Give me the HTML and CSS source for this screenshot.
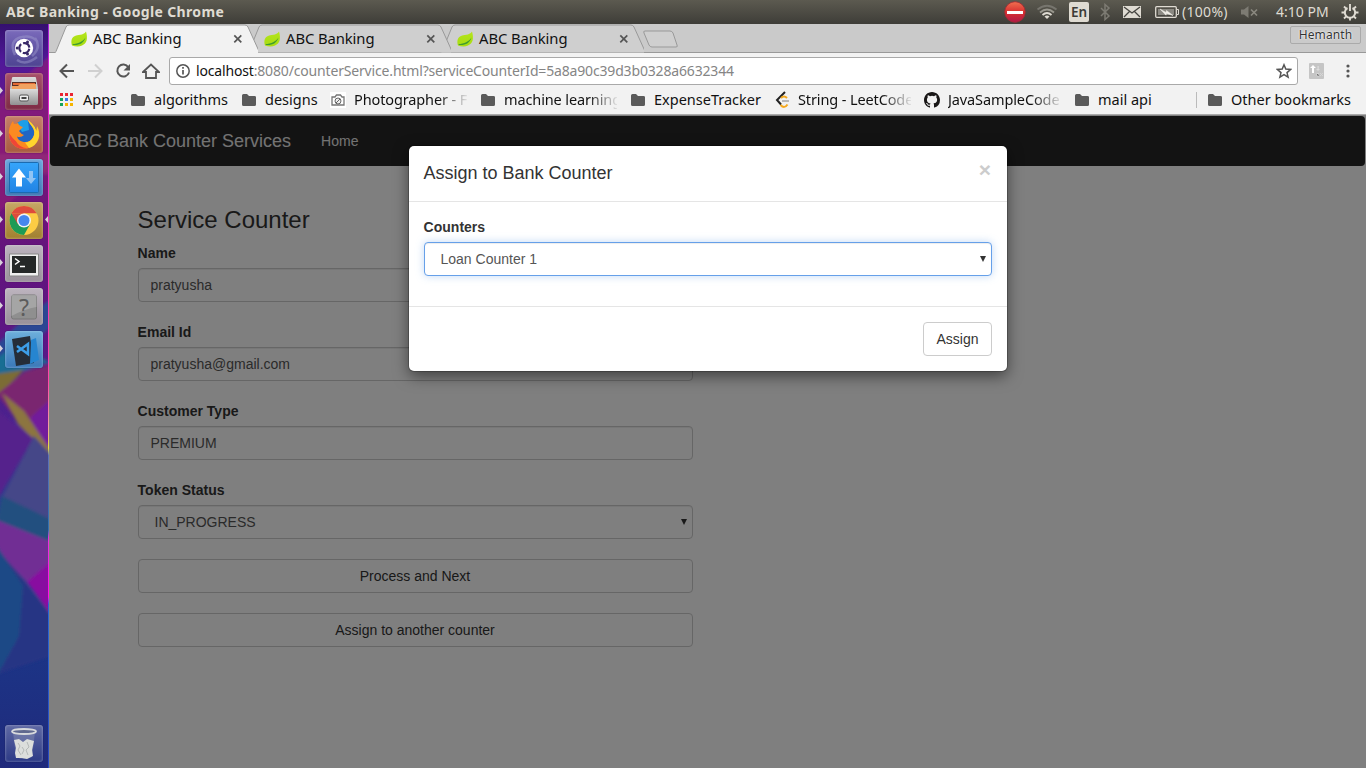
FILE: index.html
```html
<!DOCTYPE html>
<html lang="en">
<head>
<meta charset="utf-8">
<title>ABC Banking</title>
<link rel="stylesheet" href="styles.css">
</head>
<body>
<svg class="defs" aria-hidden="true">
  <defs>
    <linearGradient id="red" x1="0" y1="0" x2="0" y2="1"><stop offset="0" stop-color="#f07050"/><stop offset=".5" stop-color="#d83030"/><stop offset="1" stop-color="#b01848"/></linearGradient>
    <linearGradient id="steel" x1="0" y1="0" x2="0" y2="1"><stop offset="0" stop-color="#dcdcdc"/><stop offset="1" stop-color="#919191"/></linearGradient>
    <linearGradient id="leaf" x1="0" y1="0" x2="0" y2="1"><stop offset="0" stop-color="#b4e51a"/><stop offset="1" stop-color="#a8dc12"/></linearGradient>
    <linearGradient id="sky" x1="0" y1="0" x2="0" y2="1"><stop offset="0" stop-color="#35a5fb"/><stop offset="1" stop-color="#2183e4"/></linearGradient>
    <linearGradient id="fox" x1="0" y1="1" x2="1" y2="0"><stop offset="0" stop-color="#ef4030"/><stop offset=".5" stop-color="#fb7b20"/><stop offset="1" stop-color="#ffe033"/></linearGradient>
    <linearGradient id="wall" x1="0" y1="0" x2="0" y2="1"><stop offset="0" stop-color="#34106e"/><stop offset=".05" stop-color="#50189a"/><stop offset=".17" stop-color="#7a1878"/><stop offset=".3" stop-color="#64147c"/><stop offset=".42" stop-color="#5c1684"/><stop offset=".55" stop-color="#482490"/><stop offset=".7" stop-color="#1d4e8a"/><stop offset=".85" stop-color="#1c3486"/><stop offset="1" stop-color="#202a7c"/></linearGradient>
    <linearGradient id="edge" x1="0" y1="0" x2="0" y2="1"><stop offset="0" stop-color="#a020d8"/><stop offset=".08" stop-color="#e020d0"/><stop offset=".48" stop-color="#ff48a8"/><stop offset=".54" stop-color="#f0a0a0"/><stop offset=".57" stop-color="#e8e040"/><stop offset=".58" stop-color="#5c70b8"/><stop offset=".68" stop-color="#3070b0"/><stop offset=".69" stop-color="#e830e0"/><stop offset=".77" stop-color="#ff10e8"/><stop offset=".78" stop-color="#2868d8"/><stop offset="1" stop-color="#2848c0"/></linearGradient>
    <filter id="soft"><feGaussianBlur stdDeviation="1.800"/></filter>
    <symbol id="i-leaf" viewBox="0 0 17 16"><path fill="url(#leaf)" d="M15 0.500c2 7 1 12-4 14C8 16 4 15.500 1 14.500 0 11 0 7.500 3 5.500 7 3 12 5 15 0.500z"/><path d="M1.500 13C7 13 12 10.500 14.500 6.500 13 12 8.500 14.500 2 14z" fill="#3f9d2f"/></symbol>
    <symbol id="i-close" viewBox="0 0 10 10"><path d="M1.300 1.300l7 7m0-7l-7 7" stroke="#555" stroke-width="1.700"/></symbol>
    <symbol id="i-folder" viewBox="0 0 14 12"><path fill="#5a5a5a" d="M1.500 0H5l2 2h5.500Q14 2 14 3.300v7.200Q14 12 12.500 12h-11Q0 12 0 10.500v-9Q0 0 1.500 0z"/></symbol>
  </defs>
</svg>

<header class="panel">
  <span class="panel-title">ABC Banking - Google Chrome</span>
  <div class="indicators">
    <svg width="22" height="22" viewBox="0 0 22 22"><circle cx="11" cy="11" r="10.300" fill="url(#red)" stroke="#a32a33" stroke-width=".8"/><path fill="#fff" d="M3 10h16v3H3z"/></svg>
    <svg width="22" height="18" viewBox="0 0 22 18" fill="none" stroke-width="1.800"><path d="M1.500 6.500Q11-1 20.500 6.500" stroke="#77756e"/><path d="M4 9.500Q11 3.500 18 9.500" stroke="#9a988f"/><path d="M6.500 12Q11 8 15.500 12" stroke="#dfdbd2"/><path d="M11 16l-2.500-2.500q2.500-1.800 5 0z" fill="#dfdbd2"/></svg>
    <span class="lang">En</span>
    <svg width="14" height="18" viewBox="0 0 14 18"><path d="M3 5l8 8-4 3.500v-15L11 5l-8 8" fill="none" stroke="#7d7b73" stroke-width="1.500"/></svg>
    <svg width="20" height="14" viewBox="0 0 20 14"><rect x="1" y="1" width="18" height="12" fill="#dfdbd2"/><path d="M2 2l8 6 8-6M2 12l5.500-5.500M18 12l-5.500-5.500" fill="none" stroke="#45443f" stroke-width="1.300"/></svg>
    <svg width="26" height="14" viewBox="0 0 26 14"><rect x="1.700" y="1.700" width="20.600" height="10.600" rx="1" fill="none" stroke="#dfdbd2" stroke-width="1.300"/><path d="M23 4.500h1.500v5H23" fill="none" stroke="#dfdbd2"/><path fill="#8b8982" d="M4 4h16v6H4z"/><path d="M6 4l6 3.500.5-2L19 10.500l-6.500-2-.5 1.700z" fill="#f1eee7" stroke="#f1eee7" stroke-width=".5"/></svg>
    <span class="panel-text battery">(100%)</span>
    <svg width="20" height="14" viewBox="0 0 20 14"><path d="M1 4.500h3L8.500 1v12L4 9.500H1z" fill="#7d7b73"/><path d="M11 4.500l6 6m0-6l-6 6" stroke="#8a887f" stroke-width="1.700"/></svg>
    <span class="panel-text clock">4:10 PM</span>
    <svg width="18" height="18" viewBox="0 0 18 18" fill="none" stroke="#dfdbd2"><path d="M6.500 5A5.200 5.200 0 1 0 11.500 5" stroke-width="2"/><path d="M9 14.500v3M9 1v7M.5 9.500h4M13.500 9.500h4M3 3.500l2.400 2.400M15 3.500l-2.400 2.400M3 15.500l2.400-2.400M15 15.500l-2.400-2.400" stroke-width="1.900"/></svg>
  </div>
</header>

<div class="desktop">
  <nav class="launcher">
    <svg class="wallpaper" width="49" height="744" viewBox="0 0 49 744">
      <path fill="url(#wall)" d="M0 0h49v744H0z"/>
      <g filter="url(#soft)">
        <path fill="#8c1d78" opacity=".7" d="M-3 76L52 30v110L-3 190z"/>
        <path fill="#9a3378" opacity=".5" d="M-3 130h55v20H-3z"/>
        <path fill="#1d559a" opacity=".75" d="M-3 320L25 294l27-20v28L-3 350z"/>
        <path fill="#167294" opacity=".9" d="M-3 334L14 322 50 338-3 356z"/>
        <path fill="#7c6c36" d="M-3 350L24 346-3 373z"/>
        <path fill="#7a2670" d="M-3 370l28-22 27-8v82L12 390z"/>
        <path fill="#721b9b" d="M30 394l22-20v60z"/>
        <path fill="#8c7440" d="M2 369l22 18 26 39v6L18 400z"/>
        <path fill="#54208c" d="M-3 386l36 28L2 468l-5 8z"/>
        <path fill="#454688" d="M34 412l18 20v82L2 474z"/>
        <path fill="#20507f" d="M2 472l50 24v26L-3 500z"/>
        <path fill="#712d94" d="M-3 496l55 22v68L-3 526z"/>
        <path fill="#880fa0" d="M27 558l25-22v56z"/>
        <path fill="#263484" d="M-3 524l55 68v40L-3 650z"/>
        <path fill="#1d4a86" d="M-3 522l26 40-4 50-22 40z"/>
      </g>
      <path fill="url(#edge)" d="M48 0h1v744h-1z"/>
      <g fill="#d8d0da"><path d="M0 63l3 3.500L0 70zM0 106l3 3.500L0 113zM0 149l3 3.500L0 156zM0 192l3 3.500L0 199zM0 235l3 3.500L0 242zM0 278l3 3.500L0 285zM0 321l3 3.500L0 328zM48 192l-3 3.500 3 3.500z"/></g>
    </svg>
    <div class="tile dash"><svg width="38" height="37" viewBox="0 0 38 37"><g fill="none" stroke="#aaa8d6" stroke-width="2.500" opacity=".4"><path d="M10 25Q3 10 17 7q8-2 14 3"/><path d="M27 26q10-9 3-18M12 30q9 6 20-3"/></g><circle cx="19" cy="18" r="9.200" fill="#fff"/><circle cx="19.300" cy="18" r="5" fill="none" stroke="#382968" stroke-width="2.200" stroke-dasharray="8.500 2" transform="rotate(8 19 18)"/><g fill="#382968"><circle cx="12.200" cy="18" r="1.500"/><circle cx="22.500" cy="12" r="1.500"/><circle cx="22.500" cy="24" r="1.500"/></g></svg></div>
    <div class="tile files"><svg width="38" height="37" viewBox="0 0 38 37"><path fill="url(#steel)" d="M7 5q0-1 1-1h22q1 0 1 1l2 10v15q0 2-2 2H7q-2 0-2-2V15z"/><path d="M7 9h24v9H7z" fill="#5b3026"/><path d="M8 10h22v2H8z" fill="#e46b35"/><path d="M7 13h6l2-2h16v7H7z" fill="#f1a261"/><path d="M5 16h28v14q0 2-2 2H7q-2 0-2-2z" fill="url(#steel)"/><rect x="14.500" y="22" width="9" height="6" rx="1.500" fill="#eee" stroke="#555"/><path d="M16.500 25h5" stroke="#444" stroke-width="2"/></svg></div>
    <div class="tile firefox"><svg width="38" height="37" viewBox="0 0 38 37"><circle cx="19" cy="18" r="13" fill="#2166c4"/><path d="M12 8Q16 2.500 23 4.500L24 14l-7 2z" fill="#1c9fe8"/><path fill="#fb8a22" d="M23 3.500q1 4 4 7 4 5 1 11-4 6-11 4-4-1-5-5 4 1.500 7-1.500-3-1-5-4l4-4q-4-1-5-4l-4 1-1-3Q3 11 4 20q2 10 11 12.500 10 2 16-6 4-7 1-15l-1 4q-1-5-4-7.500T23 3.500z"/><path fill="#ffd52d" d="M23 3.500q1 4 4 7 4 5 1 11-3 5-8 5l4 5.500q7-2 9.500-9 2-7-1.500-13l-.5 5Q30 10 27 7.500T23 3.500z"/><path fill="#ee4637" d="M4 17q0 10 8 14.500 5 2 10 .7-8-1-11-7Q7 22 4 17z"/></svg></div>
    <div class="tile transfer"><svg width="38" height="37" viewBox="0 0 38 37"><rect x="4.500" y="3.500" width="29" height="30" rx="1" fill="url(#sky)" stroke="#1b6bb0"/><path d="M14 9.500l7 9h-4v9h-6v-9H7z" fill="#fff"/><path d="M26 25l5-6h-3v-7h-4v7h-3z" fill="#90c4f4"/></svg></div>
    <div class="tile chrome"><svg width="38" height="37" viewBox="0 0 38 37"><circle cx="19" cy="18.500" r="14.500" fill="#fccc44"/><path d="M6.400 11.300A14.500 14.500 0 0 1 31.600 11.300H19z" fill="#de4b3d"/><path d="M6.400 11.300A14.500 14.500 0 0 0 19 33l6.200-11L19 25z" fill="#1d9b55"/><path d="M6.400 11.300L12.800 22l6-10.700z" fill="#de4b3d"/><circle cx="19" cy="18.500" r="7" fill="#f3f3f3"/><circle cx="19" cy="18.500" r="5.500" fill="#4587ee"/></svg></div>
    <div class="tile plain"><svg width="38" height="37" viewBox="0 0 38 37"><path d="M4.500 9h29v22h-29z" fill="#eee" stroke="#888"/><path d="M7 11h24v17H7z" fill="#252828"/><path d="M10 13.500l4 3-4 3M15 21.500h5" fill="none" stroke="#fff" stroke-width="1.500"/></svg></div>
    <div class="tile plain"><svg width="38" height="37" viewBox="0 0 38 37"><rect x="6.500" y="7" width="25" height="24" rx="2" fill="#8f8f8f" stroke="#777"/><path d="M6.500 7h25v12q-12 2-25 9z" fill="#b4b4b4" opacity=".6"/></svg><span class="unknown">?</span></div>
    <div class="tile code"><svg width="38" height="37" viewBox="0 0 38 37"><path d="M7 8l18-3 4 27-18 3z" fill="#252d38"/><path d="M26 9l5-2 3 22-9 4z" fill="#2685d0"/><path d="M12 15l11 8v-10L12 21" fill="none" stroke="#3d9ee8" stroke-width="2.500"/></svg></div>
    <div class="tile trash"><svg width="38" height="37" viewBox="0 0 38 37"><path d="M8 7l3 25q8 4 16 0l3-25z" fill="#9da2ba" opacity=".35"/><path d="M9 15l5-1 4 3 4-3 7 2-2 9 1 6-6 3-5-1-6 0-1-5 1-5z" fill="#dcdedc"/><path d="M13 18l2 3-2 4 3 5M22 17l2 5-3 3 2 5M17 22l2 3-2 4" stroke="#b5b9b8" fill="none"/><ellipse cx="19" cy="6.500" rx="12" ry="2.500" fill="#60698f" stroke="#d7d9dc" stroke-width="1.800"/></svg></div>
  </nav>

  <main class="browser">
    <div class="tabstrip">
      <div class="tab"><svg class="tab-shape" width="208" height="29" viewBox="0 0 208 29"><path d="M0 28.500h5Q6 28 7 25L16 3q1-2 3-2h176q2 0 3 2l10 22q1 3 2 3.500" fill="#cfcfcf" stroke="#999"/></svg><svg class="favicon" width="17" height="16"><use href="#i-leaf"/></svg><span class="tab-title">ABC Banking</span><svg class="tab-close" width="10" height="10"><use href="#i-close"/></svg></div>
      <div class="tab"><svg class="tab-shape" width="208" height="29" viewBox="0 0 208 29"><path d="M0 28.500h5Q6 28 7 25L16 3q1-2 3-2h176q2 0 3 2l10 22q1 3 2 3.500" fill="#cfcfcf" stroke="#999"/></svg><svg class="favicon" width="17" height="16"><use href="#i-leaf"/></svg><span class="tab-title">ABC Banking</span><svg class="tab-close" width="10" height="10"><use href="#i-close"/></svg></div>
      <div class="tab"><svg class="tab-shape" width="208" height="29" viewBox="0 0 208 29"><path d="M0 28.500h5Q6 28 7 25L16 3q1-2 3-2h176q2 0 3 2l10 22q1 3 2 3.500" fill="#cfcfcf" stroke="#999"/></svg><svg class="favicon" width="17" height="16"><use href="#i-leaf"/></svg><span class="tab-title">ABC Banking</span><svg class="tab-close" width="10" height="10"><use href="#i-close"/></svg></div>
      <svg class="new-tab" width="36" height="18" viewBox="0 0 36 18"><path d="M2 1h25q2 0 3 2l4 12q1 2-1 2H9q-2 0-3-2L1 3q-1-2 1-2z" fill="#cfcfcf" stroke="#999"/></svg>
      <span class="profile">Hemanth</span>
    </div>

    <div class="toolbar">
      <svg width="16" height="16" viewBox="0 0 16 16" fill="none" stroke="#555" stroke-width="2"><path d="M15 8H2M8 1.500L1.500 8 8 14.500"/></svg>
      <svg width="16" height="16" viewBox="0 0 16 16" fill="none" stroke="#d0d0d0" stroke-width="2"><path d="M1 8h13M8 1.500L14.500 8 8 14.500"/></svg>
      <svg width="16" height="16" viewBox="0 0 16 16"><path d="M13.300 4.200A6 6 0 1 0 14 9.500" fill="none" stroke="#555" stroke-width="2"/><path d="M15 1v6.500H8.500z" fill="#555"/></svg>
      <svg width="18" height="16" viewBox="0 0 18 16"><path d="M1 9l8-7.500L17 9h-3v6H4V9z" fill="none" stroke="#555" stroke-width="1.800"/></svg>
      <div class="omnibox">
        <svg width="14" height="14" viewBox="0 0 14 14"><circle cx="7" cy="7" r="6.200" fill="none" stroke="#555" stroke-width="1.500"/><path d="M7 6v4.500M7 3v1.700" stroke="#555" stroke-width="1.700"/></svg>
        <span class="url"><b>localhost</b>:8080/counterService.html?serviceCounterId=5a8a90c39d3b0328a6632344</span>
        <svg width="16" height="16" viewBox="0 0 16 16"><path d="M8 1.800l1.800 4.300 4.700.4L11 9.600l1.100 4.600L8 11.700l-4.100 2.500L5 9.600 1.500 6.500l4.700-.4z" fill="none" stroke="#555" stroke-width="1.500"/></svg>
      </div>
      <svg class="extension" width="15" height="16" viewBox="0 0 15 16"><rect width="15" height="16" rx="1" fill="#c5c5c5"/><path d="M4 2l3 3H5v5H3V5H1z" fill="#fff"/><path d="M9 8l2-2h-1.300V3H8.500v3H7z" fill="#ddd"/><path d="M8 10.500h2M8 10v3h2M11 10l3 3m0-3l-3 3" stroke="#d5d5d5"/></svg>
      <svg class="menu" width="4" height="14" viewBox="0 0 4 14" fill="#555"><circle cx="2" cy="2" r="1.600"/><circle cx="2" cy="7" r="1.600"/><circle cx="2" cy="12" r="1.600"/></svg>
    </div>

    <div class="bookmarks">
      <div class="bookmark"><svg width="14" height="14" viewBox="0 0 14 14"><path d="M0 0h3v3H0zM5 0h3v3H5zM10 0h3v3h-3z" fill="#ea2533"/><path d="M0 5h3v3H0zM0 10h3v3H0z" fill="#14a35c"/><path d="M5 5h3v3H5z" fill="#3c78e8"/><path d="M10 5h3v3h-3zM5 10h3v3H5zM10 10h3v3h-3z" fill="#f5b400"/></svg><span>Apps</span></div>
      <div class="bookmark"><svg width="14" height="12"><use href="#i-folder"/></svg><span>algorithms</span></div>
      <div class="bookmark"><svg width="14" height="12"><use href="#i-folder"/></svg><span>designs</span></div>
      <div class="bookmark site"><svg width="16" height="16" viewBox="0 0 16 16"><path fill="#fff" d="M0 0h16v16H0z"/><path d="M2 5h3l1.500-2h4L12 5h2v8H2z" fill="none" stroke="#777" stroke-width="1.300"/><circle cx="8" cy="9" r="3" fill="#eee" stroke="#666"/><path d="M6 11l4-4" stroke="#666"/></svg><span class="fade">Photographer - F</span></div>
      <div class="bookmark"><svg width="14" height="12"><use href="#i-folder"/></svg><span class="fade">machine learning</span></div>
      <div class="bookmark"><svg width="14" height="12"><use href="#i-folder"/></svg><span>ExpenseTracker</span></div>
      <div class="bookmark site"><svg width="15" height="18" viewBox="0 0 15 18" fill="none" stroke-width="2"><path d="M10 1L2 9l4 4.500" stroke="#222"/><path d="M5.500 14q4 4 7-.5M6 7q3-3 6 0" stroke="#f4a81d"/><path d="M7 10h7" stroke="#b8b8b8"/></svg><span class="fade">String - LeetCode</span></div>
      <div class="bookmark site"><svg width="16" height="16" viewBox="0 0 16 16"><path fill="#191717" d="M8 0C3.580 0 0 3.580 0 8c0 3.540 2.290 6.530 5.470 7.590.4.070.55-.17.55-.38 0-.19-.01-.82-.01-1.490-2.010.37-2.530-.49-2.690-.94-.09-.23-.48-.94-.82-1.130-.28-.15-.68-.52-.01-.53.63-.01 1.080.58 1.230.82.72 1.210 1.870.87 2.330.66.070-.52.28-.87.51-1.070-1.780-.2-3.640-.89-3.640-3.950 0-.87.31-1.590.82-2.150-.08-.2-.36-1.020.080-2.120 0 0 .67-.21 2.200.82a7.400 7.400 0 0 1 4 0c1.530-1.040 2.200-.82 2.200-.82.44 1.100.16 1.920.080 2.120.51.56.82 1.270.82 2.150 0 3.070-1.870 3.750-3.650 3.950.29.25.54.73.54 1.480 0 1.070-.01 1.930-.01 2.200 0 .21.15.46.55.38A8 8 0 0 0 16 8c0-4.420-3.580-8-8-8z"/></svg><span class="fade">JavaSampleCode</span></div>
      <div class="bookmark"><svg width="14" height="12"><use href="#i-folder"/></svg><span>mail api</span></div>
      <div class="bookmark other"><svg width="14" height="12"><use href="#i-folder"/></svg><span>Other bookmarks</span></div>
    </div>

    <div class="page">
      <nav class="navbar"><span class="brand">ABC Bank Counter Services</span><span>Home</span></nav>
      <form class="service-form">
        <h3>Service Counter</h3>
        <div class="group"><label>Name</label><input class="control" value="pratyusha"></div>
        <div class="group"><label>Email Id</label><input class="control" value="pratyusha@gmail.com"></div>
        <div class="group"><label>Customer Type</label><input class="control" value="PREMIUM"></div>
        <div class="group"><label>Token Status</label><div class="control select"><span>IN_PROGRESS</span><i class="arrow"></i></div></div>
        <button type="button" class="btn wide">Process and Next</button>
        <button type="button" class="btn wide">Assign to another counter</button>
      </form>
      <div class="backdrop">
        <section class="modal">
          <div class="modal-header"><h4>Assign to Bank Counter</h4><span class="dismiss">×</span></div>
          <div class="modal-body"><label>Counters</label><div class="control select focused"><span>Loan Counter 1</span><i class="arrow"></i></div></div>
          <div class="modal-footer"><button type="button" class="btn assign">Assign</button></div>
        </section>
      </div>
    </div>
  </main>
</div>
</body>
</html>
```
FILE: styles.css
```css
* { box-sizing: border-box; }
body { margin: 0; width: 1366px; height: 768px; overflow: hidden; font-family: "Noto Sans", sans-serif; font-size: 14px; color: #111; }
svg { display: block; flex: none; }
.defs { position: absolute; width: 0; height: 0; }

.panel { height: 24px; display: flex; align-items: center; justify-content: space-between; padding-left: 6px; background: linear-gradient(#5c5a50, #3e3d38); color: #dfdbd2; }
.panel-title { font-weight: 700; font-size: 14px; letter-spacing: .36px; line-height: 24px; white-space: nowrap; }
.indicators { width: 362px; display: grid; grid-template-columns: 32px 33px 29px 24px 32px 28px 58px 36px 65px 25px; align-items: center; height: 24px; }
.lang { width: 20px; height: 20px; border-radius: 2px; background: #dfdbd2; color: #3c3b37; font: 600 13.5px/21px "Noto Sans", sans-serif; text-align: center; }
.panel-text { font-size: 14px; line-height: 24px; white-space: nowrap; }
.battery { letter-spacing: .3px; }

.desktop { display: flex; height: 744px; }
.launcher { position: relative; width: 49px; flex: none; display: flex; flex-direction: column; gap: 6px; padding: 6px 0 6px 5px; }
.wallpaper { position: absolute; left: 0; top: 0; }
.tile { position: relative; width: 38px; height: 37px; flex: none; border-radius: 3px; box-shadow: inset 0 0 2px 1px rgba(255,255,255,.2), 0 0 1px rgba(0,0,0,.5); }
.dash { background: linear-gradient(#7a6abb, #4d4391); }
.files { background: linear-gradient(#a85169, #7d2a44); }
.firefox { background: linear-gradient(#c57f68, #a85a40); }
.transfer { background: linear-gradient(#6ba6dc, #3f78b4); }
.chrome { background: linear-gradient(#c6a766, #a1802f); }
.plain { background: linear-gradient(#bdb4bf, #989099); }
.code { background: linear-gradient(#6db0dc, #3a78b8); }
.trash { margin-top: auto; background: linear-gradient(#5f69a4, #2c3a86); }
.unknown { position: absolute; inset: 0; text-align: center; color: #5c5c5c; font-size: 23px; line-height: 38px; }

.browser { flex: 1; min-width: 0; display: flex; flex-direction: column; background: #f2f2f2; }
.tabstrip { position: relative; height: 29px; flex: none; display: flex; align-items: center; padding-left: 5px; background: #cacaca; border-bottom: 1px solid #999; }
.tab { position: relative; width: 193px; height: 28px; display: flex; align-items: center; padding: 2px 4px 0 17px; }
.tab:nth-child(1) { z-index: 3; }
.tab:nth-child(2) { z-index: 2; }
.tab:nth-child(3) { z-index: 1; }
.tab-shape { position: absolute; left: -4px; top: 0; }
.tab:first-child .tab-shape path { fill: #f2f2f2; }
.tab:first-child::after { content: ""; position: absolute; left: 2px; right: -11px; bottom: -1px; height: 1px; background: #f2f2f2; }
.favicon, .tab-title, .tab-close { position: relative; }
.tab-title { margin: 0 0 2px 5px; font-size: 14.8px; letter-spacing: -.08px; line-height: 22px; white-space: nowrap; }
.tab-close { margin-left: auto; }
.new-tab { margin-left: 10px; margin-top: 2px; }
.profile { margin-left: auto; margin-right: 5px; margin-bottom: 6px; width: 71px; height: 18px; border: 1px solid #aaa; border-radius: 2px; text-align: center; font-size: 12px; letter-spacing: .1px; line-height: 16px; color: #333; text-shadow: 0 0 2px #fff, 0 0 1px #fff; }

.toolbar { height: 34px; flex: none; display: flex; align-items: center; padding: 2px 16px 0 10px; gap: 12px; }
.toolbar > svg:nth-child(4) { margin-left: -1px; }
.omnibox { width: 1129px; height: 28px; flex: none; display: flex; align-items: center; border: 1px solid #a9a9a9; border-radius: 3px; background: #fff; padding: 0 5px 0 6px; margin-left: -3px; }
.url { flex: 1; margin-left: 6px; font-size: 14px; letter-spacing: -.165px; line-height: 24px; color: #858585; white-space: nowrap; }
.url b { font-weight: 400; color: #111; }
.extension { margin-left: -1px; }
.menu { margin-left: auto; }

.bookmarks { height: 28px; flex: none; display: grid; grid-template-columns: 71px 111px 88px 151px 150px 144px 149px 151px 121px auto; align-items: center; padding: 0 0 2px 11px; border-bottom: 1px solid #aaa; }
.bookmark { display: flex; align-items: center; gap: 9px; line-height: 22px; white-space: nowrap; font-size: 14.5px; }
.bookmark span { margin-bottom: 1px; }
.bookmark.site { gap: 8px; }
.fade { width: 113px; letter-spacing: -.12px; mask-image: linear-gradient(90deg, #000 74%, rgba(0,0,0,.08)); }
.other { border-left: 1px solid #bbb; height: 16px; padding-left: 11px; }

.page { position: relative; flex: 1; background: #fff; font-family: "Liberation Sans", Arial, sans-serif; font-size: 14px; line-height: 20px; color: #333; padding-top: 1px; }
.navbar { height: 50px; margin-left: 1px; margin-right: 1px; border-radius: 4px; background: #262626; display: flex; align-items: center; gap: 30px; padding-left: 15px; color: #e6e6e6; }
.brand { font-size: 18px; }
.service-form { width: 555px; margin: 41px 0 0 89px; display: flex; flex-direction: column; }
h3 { margin: 0 0 10px -.4px; font-size: 24px; line-height: 26px; font-weight: 500; color: #333; }
.group { margin-bottom: 20px; }
label { display: block; margin: 0 0 5px -.4px; font-weight: 700; line-height: 20px; color: #333; }
.control { display: block; width: 100%; height: 34px; padding: 6px 11.5px; border: 1px solid #ccc; border-radius: 4px; background: #fff; color: #555; font: 14px/20px "Liberation Sans", Arial, sans-serif; box-shadow: inset 0 1px 1px rgba(0,0,0,.075); }
.select { display: flex; align-items: center; justify-content: space-between; padding: 6px 5px 6px 15.5px; }
.arrow { width: 0; height: 0; border: 3px solid transparent; border-top: 6px solid #333; border-bottom: 0; }
.focused { border-color: #66a0e9; box-shadow: inset 0 1px 1px rgba(0,0,0,.075), 0 0 8px rgba(102,160,233,.4); }
.btn { height: 34px; padding: 6px 12px; border: 1px solid #ccc; border-radius: 4px; background: #fff; color: #333; font: 14px/20px "Liberation Sans", Arial, sans-serif; }
.wide { width: 100%; margin-bottom: 20px; padding-right: 13px; }
.assign { width: 69px; padding: 6px 0; }
.backdrop { position: absolute; inset: 0; background: rgba(0,0,0,.5); border-left: 1px solid #808080; }
.modal { width: 598px; margin: 31px auto 0; border-radius: 5px; background: #fff; box-shadow: 0 0 0 1px rgba(0,0,0,.2), 0 5px 15px rgba(0,0,0,.5); }
.modal-header { height: 56px; display: flex; align-items: flex-start; justify-content: space-between; padding: 15px 16px 0 14.500px; border-bottom: 1px solid #e5e5e5; }
h4 { margin: 0; font-size: 18px; line-height: 24px; font-weight: 500; }
.dismiss { font-size: 21px; line-height: 17px; font-weight: 700; color: #ccc; }
.modal-body { height: 104px; padding: 15px 15px 15px 15px; }
.modal-footer { height: 65px; padding: 15px; border-top: 1px solid #e5e5e5; display: flex; justify-content: flex-end; }
```
